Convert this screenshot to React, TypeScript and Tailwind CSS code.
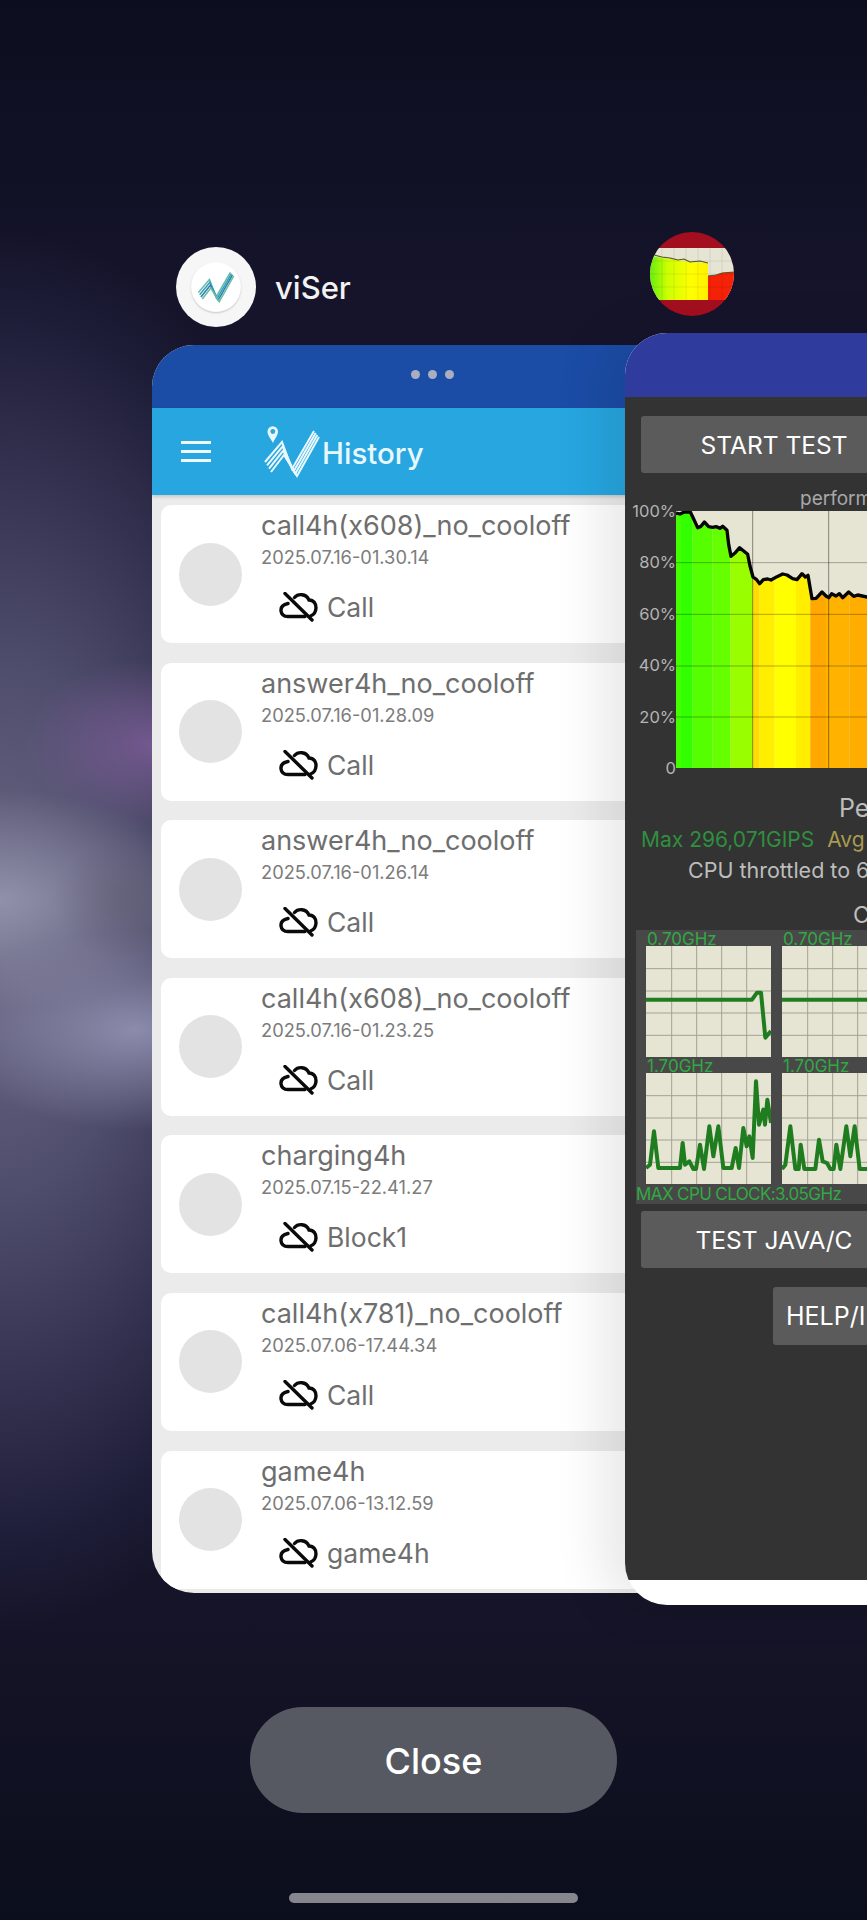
const rows = [
  { title: "call4h(x608)_no_cooloff", date: "2025.07.16-01.30.14", tag: "Call" },
  { title: "answer4h_no_cooloff", date: "2025.07.16-01.28.09", tag: "Call" },
  { title: "answer4h_no_cooloff", date: "2025.07.16-01.26.14", tag: "Call" },
  { title: "call4h(x608)_no_cooloff", date: "2025.07.16-01.23.25", tag: "Call" },
  { title: "charging4h", date: "2025.07.15-22.41.27", tag: "Block1" },
  { title: "call4h(x781)_no_cooloff", date: "2025.07.06-17.44.34", tag: "Call" },
  { title: "game4h", date: "2025.07.06-13.12.59", tag: "game4h" },
];

type Pt = [number, number];

const curve: Pt[] = [
  [0, 6], [12, 9], [25, 3], [43, 3], [52, 22], [65, 50], [75, 46], [85, 33], [98, 47], [110, 49], [120, 47], [133, 52],
  [140, 46], [153, 58], [158, 100], [165, 136], [178, 125], [191, 110], [203, 120], [215, 130], [222, 165], [231, 198],
  [241, 205], [251, 218], [262, 206], [275, 204], [285, 207], [303, 197], [320, 189], [333, 192], [350, 203], [363, 206],
  [378, 188], [388, 198], [396, 193], [404, 240], [408, 263], [420, 262], [438, 243], [450, 255], [458, 260], [467, 248],
  [480, 255], [490, 248], [500, 260], [518, 243], [533, 256], [545, 252], [574, 258], [620, 260],
];

const bands: [number, number, string][] = [
  [0, 15, "#44ff00"], [15, 50, "#33ff00"], [50, 110, "#55ff00"], [110, 163, "#66ff00"], [163, 230, "#99ff00"],
  [230, 250, "#ffdd00"], [250, 295, "#ffee00"], [295, 360, "#ffff00"], [360, 403, "#ffee00"],
  [403, 450, "#ffa800"], [450, 520, "#ffb300"], [520, 720, "#ffae00"],
];

const cpuGraphs: { label: string; points: Pt[] }[] = [
  { label: "0.70GHz", points: [[0, 161], [318, 161], [333, 140], [345, 140], [358, 275], [375, 255]] },
  { label: "0.70GHz", points: [[0, 161], [375, 161]] },
  {
    label: "1.70GHz",
    points: [
      [0, 285], [12, 275], [24, 175], [37, 285], [102, 285], [110, 210], [117, 275], [130, 265], [142, 288], [150, 288],
      [162, 215], [174, 288], [190, 160], [202, 250], [217, 160], [232, 285], [257, 285], [269, 225], [279, 285],
      [292, 165], [302, 220], [310, 190], [320, 255], [330, 25], [339, 155], [352, 110], [357, 155], [364, 80], [375, 150],
    ],
  },
  {
    label: "1.70GHz",
    points: [
      [0, 288], [10, 275], [25, 160], [40, 288], [50, 288], [56, 215], [67, 288], [100, 288], [111, 200], [122, 265],
      [135, 270], [145, 288], [155, 288], [163, 215], [175, 288], [193, 160], [205, 250], [218, 160], [233, 288], [375, 288],
    ],
  },
];

// four parallel stripes of the N, outer line to inner line
const nLines = [0, 1, 2, 3].map((i) => {
  const t = i / 3;
  const mix = (a: number, b: number) => (a + (b - a) * t).toFixed(1);
  return `${mix(10, 16)},${mix(40, 50)} ${mix(27, 29)},${mix(20, 33)} ${mix(37, 42)},${mix(47, 54)} ${mix(59, 64)},${mix(9, 15)}`;
});

function CloudOff() {
  return (
    <svg viewBox="0 0 39 30" className="h-[30px] w-[39px] shrink-0" fill="none" stroke="#0a0a0a" strokeWidth="3.4" strokeLinecap="round">
      <path d="M9 11.5C4 12.5 1.7 15.5 2 18.8C2.4 22.5 5.3 24.5 9 24.5H26" />
      <path d="M15.5 5.5C19 1.5 27 1.2 30 8C34.5 8 37.3 11.8 37 16C36.8 20 34.5 23 31.5 24" />
      <path d="M6 1.5L33 28" />
    </svg>
  );
}

function LogoHeader() {
  return (
    <svg viewBox="0 0 70 60" className="h-[60px] w-[70px] shrink-0">
      <path d="M18 21C15.5 16 12.5 13.5 12.5 9.5A5.2 5.2 0 0 1 23 9.5C23 13.5 20 16 18 21Z" fill="#e9f8fd" />
      <circle cx="17.8" cy="9.5" r="2.4" fill="#27a6e0" />
      {nLines.map((points) => (
        <polyline key={points} points={points} fill="none" stroke="#e9f8fd" strokeWidth="2" />
      ))}
    </svg>
  );
}

function LogoSmall() {
  const colors = ["#5fbfb0", "#3a9fb4", "#2f7fb8", "#6cc0a0"];
  return (
    <svg viewBox="8 7 58 49" className="h-[32px] w-[40px]">
      {nLines.map((points, i) => (
        <polyline key={points} points={points} fill="none" stroke={colors[i]} strokeWidth="2.4" />
      ))}
    </svg>
  );
}

function HistoryRow({ title, date, tag }: { title: string; date: string; tag: string }) {
  return (
    <div className="flex h-[138px] shrink-0 items-center rounded-[10px] bg-white pl-[18px] pr-2">
      <div className="h-[63px] w-[63px] shrink-0 rounded-full bg-[#e3e3e3]" />
      <div className="ml-[19px] flex h-full flex-col whitespace-nowrap">
        <div className="pt-[5px] text-[27px] leading-[32px] text-[#6e6e6e]">{title}</div>
        <div className="mt-[3px] text-[18.3px] leading-[24px] text-[#7c7c7c]">{date}</div>
        <div className="mt-[22px] flex items-center gap-[9px] pl-[18px]">
          <CloudOff />
          <span className="text-[26.5px] leading-[32px] text-[#6e6e6e]">{tag}</span>
        </div>
      </div>
    </div>
  );
}

function CpuGraph({ label, points }: { label: string; points: Pt[] }) {
  return (
    <div>
      <div className="h-[16px] pl-px text-[17px] leading-[18px] text-[#32a844]">{label}</div>
      <svg viewBox="0 0 375 333" className="h-[111px] w-[125px] bg-[#e6e4d3]">
        {[77, 152, 227, 302].map((x) => (
          <line key={x} x1={x} x2={x} y1="0" y2="333" stroke="#a3a294" strokeWidth="3" />
        ))}
        {[68, 135, 201, 268].map((y) => (
          <line key={y} y1={y} y2={y} x1="0" x2="375" stroke="#a3a294" strokeWidth="3" />
        ))}
        <polyline points={points.map((p) => p.join(",")).join(" ")} fill="none" stroke="#1f7d1f" strokeWidth="12" strokeLinejoin="round" />
      </svg>
    </div>
  );
}

function PerfChart() {
  const area = `0,771 ${curve.map((p) => p.join(",")).join(" ")} 720,771`;
  return (
    <svg viewBox="0 0 720 771" className="h-[257px] w-[240px] shrink-0 bg-[#e6e4d3]">
      <clipPath id="perf-area">
        <polygon points={area} />
      </clipPath>
      <g clipPath="url(#perf-area)">
        {bands.map(([a, b, color]) => (
          <rect key={a} x={a} y="0" width={b - a} height="771" fill={color} />
        ))}
      </g>
      {[155, 310, 465, 618].map((y) => (
        <line key={y} x1="0" x2="720" y1={y} y2={y} stroke="#000000" strokeOpacity="0.3" strokeWidth="3" />
      ))}
      {[230, 458, 686].map((x) => (
        <line key={x} x1={x} x2={x} y1="0" y2="771" stroke="#000000" strokeOpacity="0.42" strokeWidth="3" />
      ))}
      <polyline points={curve.map((p) => p.join(",")).join(" ")} fill="none" stroke="#050505" strokeWidth="10" strokeLinejoin="round" />
    </svg>
  );
}

function ThrottleIcon() {
  return (
    <svg viewBox="0 0 84 84" className="absolute left-[650px] top-[232px] h-[84px] w-[84px]">
      <clipPath id="app-round">
        <circle cx="42" cy="42" r="42" />
      </clipPath>
      <linearGradient id="app-fill" x1="0" x2="1" y1="0" y2="0">
        <stop offset="0" stopColor="#66ee11" />
        <stop offset="0.3" stopColor="#ccff00" />
        <stop offset="0.7" stopColor="#ffff00" />
        <stop offset="1" stopColor="#fff000" />
      </linearGradient>
      <g clipPath="url(#app-round)">
        <rect width="84" height="84" fill="#a30f1f" />
        <rect y="16" width="84" height="52" fill="#e6e4d3" />
        <polygon points="0,24 20,27 40,30 58,31 58,68 0,68" fill="url(#app-fill)" />
        <polygon points="58,44 66,43 72,41 84,40 84,68 58,68" fill="#f52208" />
        {[12, 24, 36, 48, 60, 72].map((x) => (
          <line key={x} x1={x} x2={x} y1="16" y2="68" stroke="#000000" strokeOpacity="0.07" />
        ))}
        {[29, 42, 55].map((y) => (
          <line key={y} x1="0" x2="84" y1={y} y2={y} stroke="#000000" strokeOpacity="0.07" />
        ))}
        <polyline points="4,23 12,25 20,26 28,28 34,27 40,30 50,29 58,31" fill="none" stroke="#55551a" strokeWidth="1.2" />
        <polyline points="58,44 66,43 72,41 84,40" fill="none" stroke="#55551a" strokeWidth="1" />
      </g>
    </svg>
  );
}

export default function App() {
  return (
    <div className="relative h-[1920px] w-[867px] overflow-hidden font-['Inter',sans-serif] bg-[radial-gradient(ellipse_75px_60px_at_128px_900px,rgba(95,92,112,0.55)_0%,transparent_100%),radial-gradient(ellipse_130px_85px_at_152px_745px,rgba(122,92,150,0.85)_0%,transparent_100%),radial-gradient(ellipse_210px_110px_at_0px_900px,rgba(155,155,180,0.8)_0%,transparent_100%),radial-gradient(ellipse_190px_100px_at_135px_1030px,rgba(150,150,182,0.85)_0%,transparent_100%),radial-gradient(ellipse_380px_700px_at_0px_930px,#6a6884_0%,#4f4d6c_38%,#33314f_66%,#1e1d38_88%,transparent_100%),linear-gradient(180deg,#0c0e1f_0%,#15142b_300px,#17162e_1200px,#151428_1620px,#0b0e1c_1920px)]">
      {/* viSer header */}
      <div className="absolute left-[176px] top-[247px] flex items-center gap-[19px]">
        <div className="flex h-[80px] w-[80px] items-center justify-center rounded-full bg-[#f6f6f6]">
          <div className="flex h-[50px] w-[50px] items-center justify-center rounded-full bg-white shadow-[0_1px_2px_rgba(0,0,0,0.2)]">
            <LogoSmall />
          </div>
        </div>
        <span className="text-[31px] font-medium leading-none text-[#f2f2f2]">viSer</span>
      </div>

      {/* viSer window */}
      <div className="absolute left-[152px] top-[345px] flex h-[1248px] w-[560px] flex-col overflow-hidden rounded-[42px] bg-[#ebebeb]">
        <div className="flex h-[63px] shrink-0 items-center gap-2 bg-[#1b4ca6] pb-[5px] pl-[259px]">
          <span className="h-[9px] w-[9px] rounded-full bg-[#a9aec0]" />
          <span className="h-[9px] w-[9px] rounded-full bg-[#a9aec0]" />
          <span className="h-[9px] w-[9px] rounded-full bg-[#a9aec0]" />
        </div>
        <div className="flex h-[87px] shrink-0 items-center bg-[#27a6e0] pl-[29px] shadow-[0_2px_3px_rgba(0,0,0,0.15)]">
          <div className="flex w-[30px] flex-col gap-[6px]">
            <div className="h-[3px] bg-[#eef9fd]" />
            <div className="h-[3px] bg-[#eef9fd]" />
            <div className="h-[3px] bg-[#eef9fd]" />
          </div>
          <div className="ml-[44px] flex items-center">
            <LogoHeader />
            <span className="ml-[-3px] mt-[4px] text-[29.5px] font-medium leading-none text-[#e8f7fd]">History</span>
          </div>
        </div>
        <div className="flex flex-1 flex-col gap-[19.6px] pl-[9px] pt-[10px]">
          {rows.map((row, idx) => (
            <HistoryRow key={`${row.date}-${idx}`} {...row} />
          ))}
        </div>
      </div>

      <ThrottleIcon />

      {/* throttling test window */}
      <div className="absolute left-[625px] top-[333px] flex h-[1272px] w-[600px] flex-col overflow-hidden rounded-[42px] bg-white shadow-[-24px_0_50px_rgba(0,0,0,0.09)]">
        <div className="h-[64px] shrink-0 bg-[#2f3c9e]" />
        <div className="h-[1183px] shrink-0 whitespace-nowrap bg-[#333333] pl-px">
          <div className="ml-[15px] mt-[19px] flex h-[57px] w-[266px] items-center justify-center rounded-[3px] bg-[#5b5b5b] pt-[2px] text-[24.5px] text-white">
            START TEST
          </div>
          <div className="h-[38px] pl-[174px] pt-[14px] text-[19px] leading-[24px] text-[#a8a8a8]">performance</div>
          <div className="flex h-[257px]">
            <div className="-my-[10px] flex h-[277px] w-[50px] flex-col items-end justify-between text-[16.5px] leading-[20px] text-[#b4b4b4]">
              <span>100%</span>
              <span>80%</span>
              <span>60%</span>
              <span>40%</span>
              <span>20%</span>
              <span>0</span>
            </div>
            <PerfChart />
          </div>
          <div className="mt-[25px] pl-[213px] text-[25px] leading-[30px] text-[#bdbdbd]">Performance</div>
          <div className="mt-[2px] flex gap-[13px] pl-[15px] text-[21px] leading-[30px]">
            <span className="text-[#2f8f3f]">Max 296,071GIPS</span>
            <span className="text-[#a89b50]">Avg</span>
          </div>
          <div className="pl-[62px] text-[21.5px] leading-[30px] text-[#bdbdbd]">CPU throttled to 67%</div>
          <div className="mt-[16px] pl-[227px] text-[23px] leading-[29px] text-[#bdbdbd]">CPU</div>
          <div className="ml-[10px] w-[285px] bg-[#484848]">
            <div className="grid w-[270px] grid-cols-[125px_125px] gap-x-[11px] pl-[10px]">
              {cpuGraphs.map((g, idx) => (
                <CpuGraph key={idx} {...g} />
              ))}
            </div>
            <div className="h-[20px] text-[17px] leading-[20px] tracking-[-0.6px] text-[#32a844]">MAX CPU CLOCK:3.05GHz</div>
          </div>
          <div className="ml-[15px] mt-[7px] flex h-[57px] w-[266px] items-center justify-center rounded-[3px] bg-[#5b5b5b] pt-[2px] text-[24.5px] text-white">
            TEST JAVA/C
          </div>
          <div className="ml-[147px] mt-[19px] flex h-[58px] w-fit items-center rounded-[3px] bg-[#5b5b5b] px-[13px] pt-[2px] text-[25px] text-white">
            HELP/INFO
          </div>
        </div>
      </div>

      {/* bottom controls */}
      <div className="absolute inset-x-0 top-[1707px] flex flex-col items-center gap-[80px]">
        <div className="flex h-[106px] w-[367px] items-center justify-center rounded-[53px] bg-[#575962] pt-[1px] text-[36px] font-medium text-white">
          Close
        </div>
        <div className="h-[10px] w-[289px] rounded-[5px] bg-[#85868e]" />
      </div>
    </div>
  );
}
